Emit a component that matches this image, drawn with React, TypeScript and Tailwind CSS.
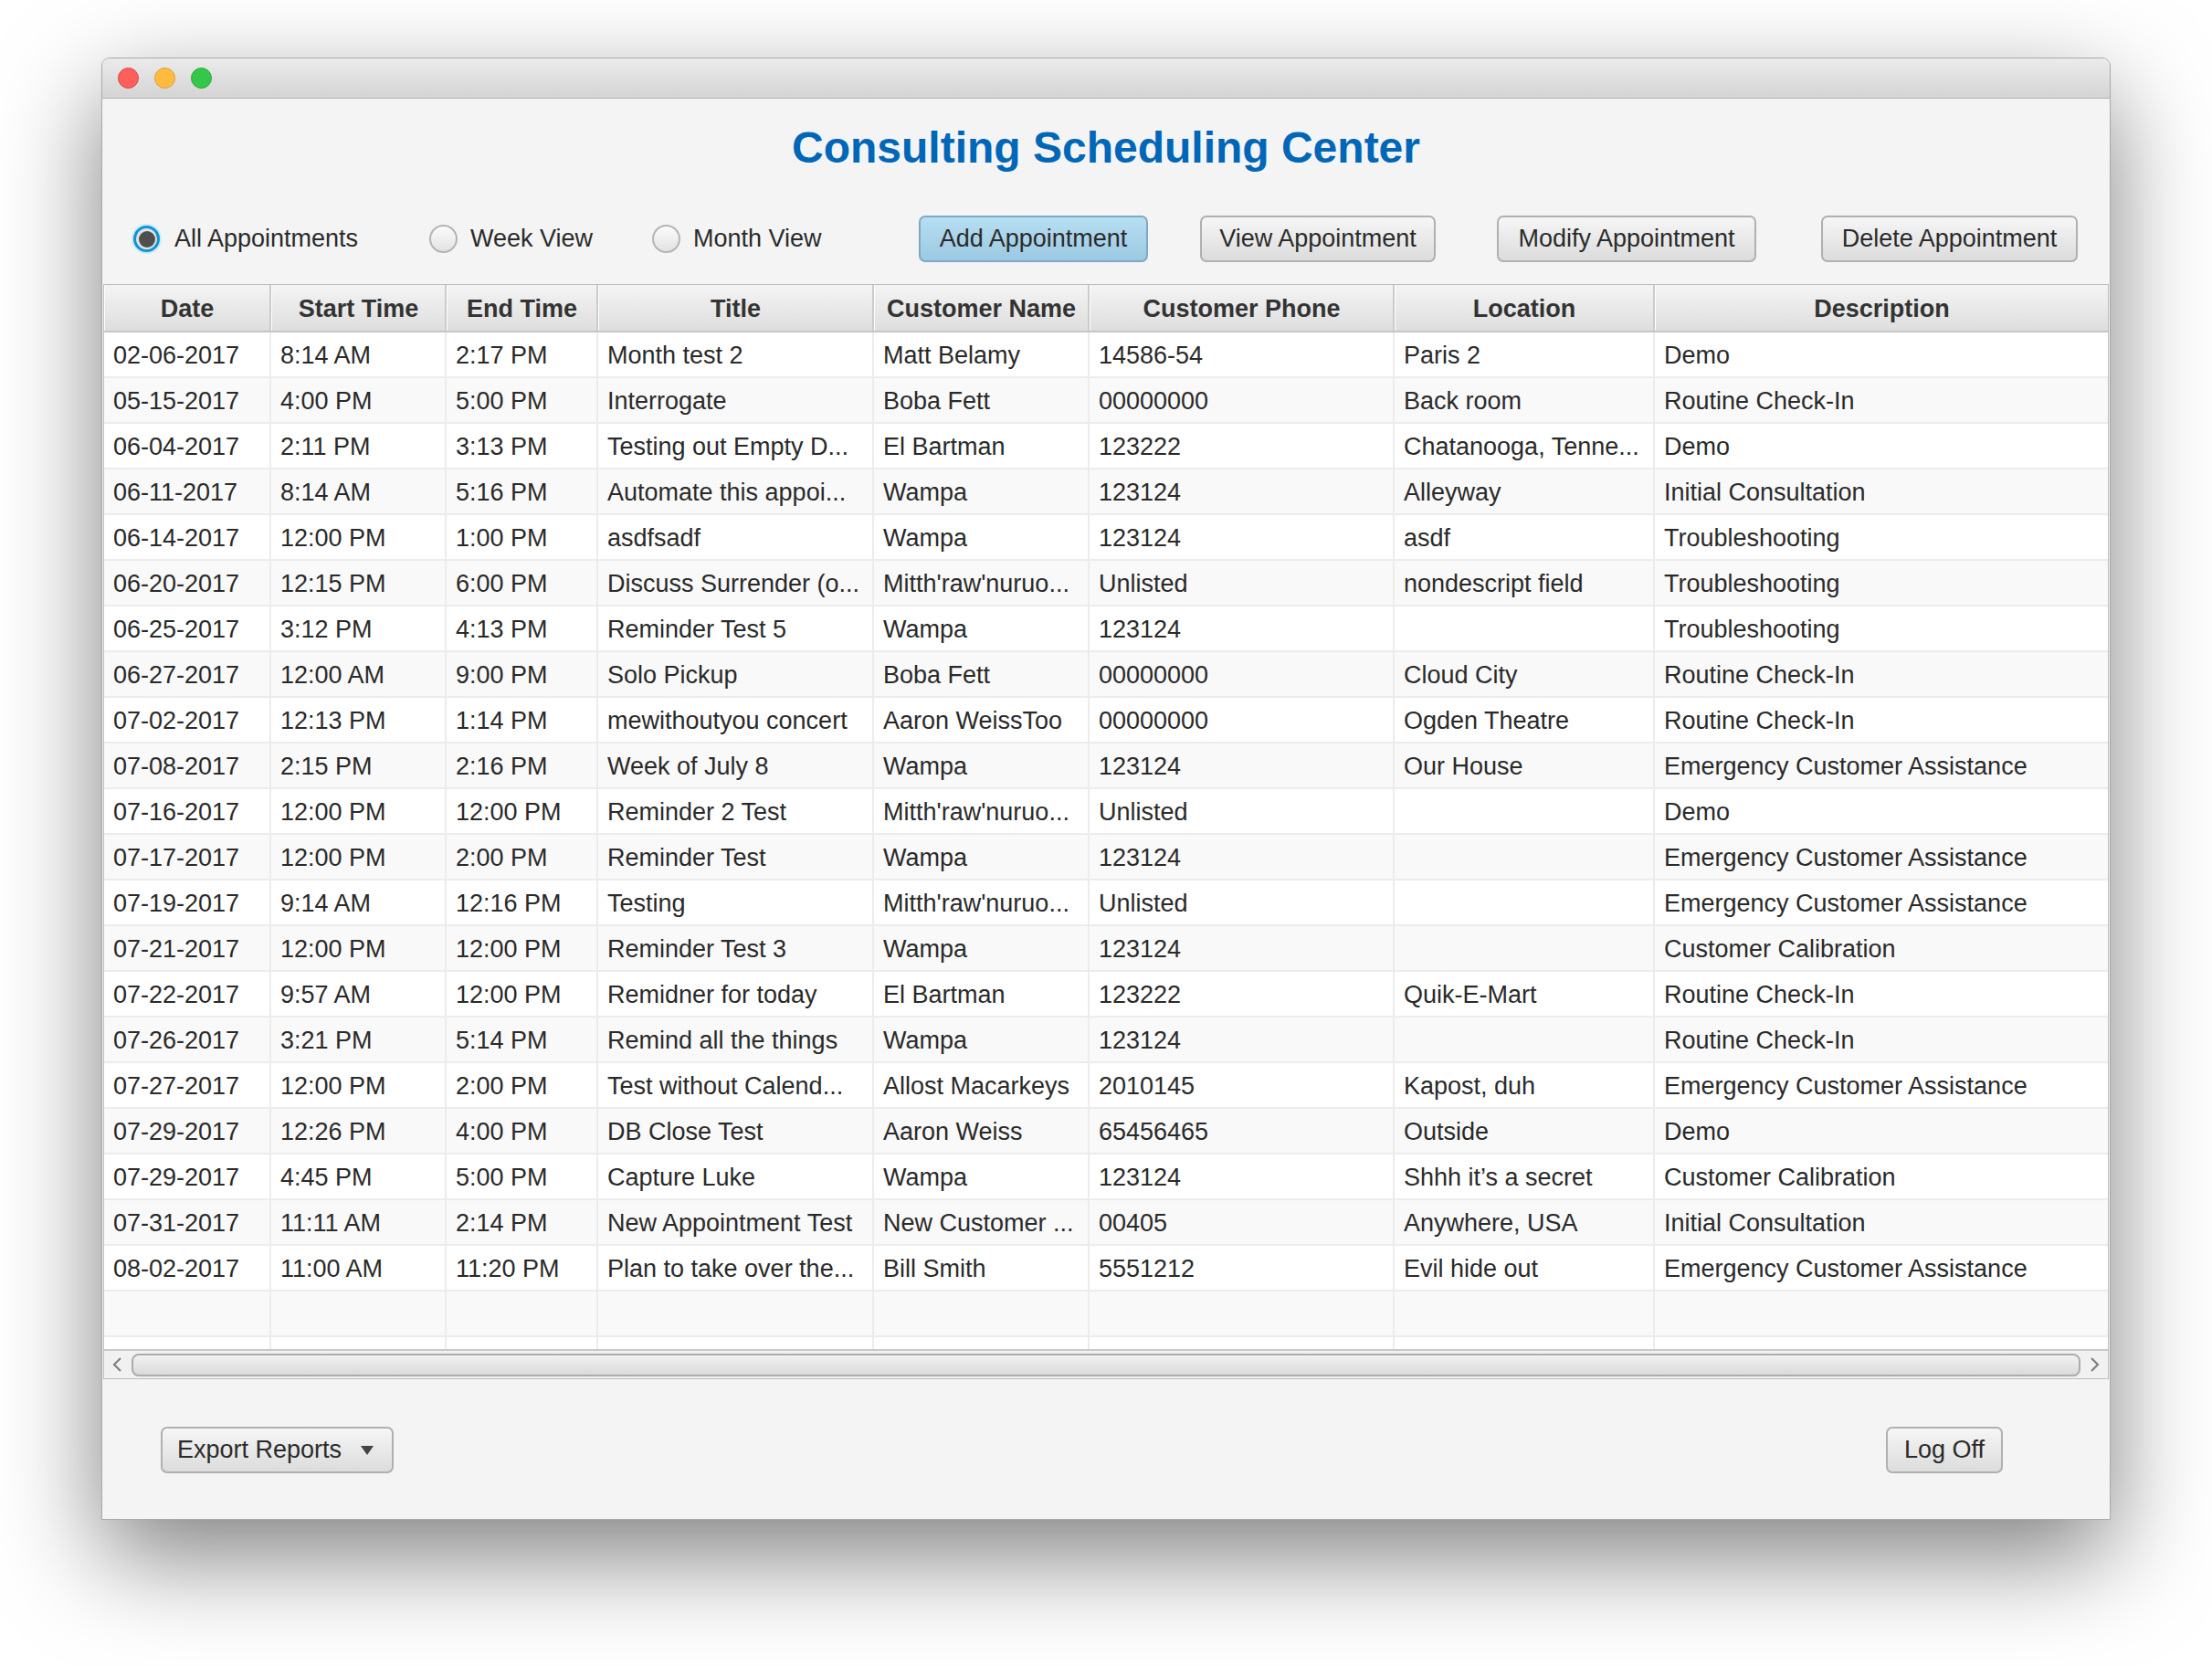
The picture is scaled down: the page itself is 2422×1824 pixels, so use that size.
import React from 'react';

const rows: string[][] = [
  ['02-06-2017', '8:14 AM', '2:17 PM', 'Month test 2', 'Matt Belamy', '14586-54', 'Paris 2', 'Demo'],
  ['05-15-2017', '4:00 PM', '5:00 PM', 'Interrogate', 'Boba Fett', '00000000', 'Back room', 'Routine Check-In'],
  ['06-04-2017', '2:11 PM', '3:13 PM', 'Testing out Empty D...', 'El Bartman', '123222', 'Chatanooga, Tenne...', 'Demo'],
  ['06-11-2017', '8:14 AM', '5:16 PM', 'Automate this appoi...', 'Wampa', '123124', 'Alleyway', 'Initial Consultation'],
  ['06-14-2017', '12:00 PM', '1:00 PM', 'asdfsadf', 'Wampa', '123124', 'asdf', 'Troubleshooting'],
  ['06-20-2017', '12:15 PM', '6:00 PM', 'Discuss Surrender (o...', "Mitth'raw'nuruo...", 'Unlisted', 'nondescript field', 'Troubleshooting'],
  ['06-25-2017', '3:12 PM', '4:13 PM', 'Reminder Test 5', 'Wampa', '123124', '', 'Troubleshooting'],
  ['06-27-2017', '12:00 AM', '9:00 PM', 'Solo Pickup', 'Boba Fett', '00000000', 'Cloud City', 'Routine Check-In'],
  ['07-02-2017', '12:13 PM', '1:14 PM', 'mewithoutyou concert', 'Aaron WeissToo', '00000000', 'Ogden Theatre', 'Routine Check-In'],
  ['07-08-2017', '2:15 PM', '2:16 PM', 'Week of July 8', 'Wampa', '123124', 'Our House', 'Emergency Customer Assistance'],
  ['07-16-2017', '12:00 PM', '12:00 PM', 'Reminder 2 Test', "Mitth'raw'nuruo...", 'Unlisted', '', 'Demo'],
  ['07-17-2017', '12:00 PM', '2:00 PM', 'Reminder Test', 'Wampa', '123124', '', 'Emergency Customer Assistance'],
  ['07-19-2017', '9:14 AM', '12:16 PM', 'Testing', "Mitth'raw'nuruo...", 'Unlisted', '', 'Emergency Customer Assistance'],
  ['07-21-2017', '12:00 PM', '12:00 PM', 'Reminder Test 3', 'Wampa', '123124', '', 'Customer Calibration'],
  ['07-22-2017', '9:57 AM', '12:00 PM', 'Remidner for today', 'El Bartman', '123222', 'Quik-E-Mart', 'Routine Check-In'],
  ['07-26-2017', '3:21 PM', '5:14 PM', 'Remind all the things', 'Wampa', '123124', '', 'Routine Check-In'],
  ['07-27-2017', '12:00 PM', '2:00 PM', 'Test without Calend...', 'Allost Macarkeys', '2010145', 'Kapost, duh', 'Emergency Customer Assistance'],
  ['07-29-2017', '12:26 PM', '4:00 PM', 'DB Close Test', 'Aaron Weiss', '65456465', 'Outside', 'Demo'],
  ['07-29-2017', '4:45 PM', '5:00 PM', 'Capture Luke', 'Wampa', '123124', 'Shhh it\u2019s a secret', 'Customer Calibration'],
  ['07-31-2017', '11:11 AM', '2:14 PM', 'New Appointment Test', 'New Customer ...', '00405', 'Anywhere, USA', 'Initial Consultation'],
  ['08-02-2017', '11:00 AM', '11:20 PM', 'Plan to take over the...', 'Bill Smith', '5551212', 'Evil hide out', 'Emergency Customer Assistance'],
  ['', '', '', '', '', '', '', ''],
  ['', '', '', '', '', '', '', ''],
];

const headers = ['Date', 'Start Time', 'End Time', 'Title', 'Customer Name', 'Customer Phone', 'Location', 'Description'];

const cols = 'grid grid-cols-[183px_192px_166px_302px_236px_334px_285px_1fr]';

const Radio = ({ label, checked, width }: { label: string; checked?: boolean; width: string }) => (
  <div className={`flex items-center gap-[14px] ${width}`}>
    {checked ? (
      <div className="w-[33px] h-[33px] rounded-full bg-[#cfe9f7] flex items-center justify-center">
        <div className="w-[29px] h-[29px] rounded-full border-[3px] border-[#0a96d8] bg-[#e2e2e2] flex items-center justify-center">
          <div className="w-[18px] h-[18px] rounded-full bg-[#4f4f4f]" />
        </div>
      </div>
    ) : (
      <div className="w-[31px] h-[31px] rounded-full border-2 border-[#b4b4b4] bg-gradient-to-b from-[#fbfbfb] to-[#e2e2e2]" />
    )}
    <span className="text-[27px] text-[#2b2b2b]">{label}</span>
  </div>
);

const Button = ({ label, width, primary }: { label: string; width: string; primary?: boolean }) => (
  <button
    className={`h-[51px] ${width} rounded-[7px] border-2 text-[27px] text-[#2b2b2b] flex items-center justify-center ${
      primary
        ? 'border-[#7fa9c2] bg-gradient-to-b from-[#b7def2] to-[#9bc9e2]'
        : 'border-[#b0b0b0] bg-gradient-to-b from-[#f6f6f6] to-[#dcdcdc]'
    }`}
  >
    {label}
  </button>
);

export default function App() {
  return (
    <div
      className="w-[2422px] h-[1824px] bg-white pt-[63px] pl-[111px] overflow-hidden"
      style={{ fontFamily: '"Liberation Sans", Arial, sans-serif' }}
    >
      <div className="w-[2200px] h-[1601px] flex flex-col rounded-t-[9px] bg-[#f4f4f4] border border-[#a9a9a9] shadow-[0_40px_110px_rgba(0,0,0,0.5)] overflow-hidden">
        {/* title bar */}
        <div className="h-[44px] shrink-0 flex items-center gap-[17px] pl-[17px] bg-gradient-to-b from-[#ebebeb] to-[#d4d4d4] border-b border-[#b3b3b3]">
          <div className="w-[23px] h-[23px] rounded-full bg-[#fc605c] border border-[#df4744]" />
          <div className="w-[23px] h-[23px] rounded-full bg-[#fdbc40] border border-[#de9e34]" />
          <div className="w-[23px] h-[23px] rounded-full bg-[#34c84a] border border-[#27aa35]" />
        </div>

        <div className="flex-1 flex flex-col">
          <h1 className="pt-[26px] h-[82px] leading-[56px] text-center text-[48px] font-bold text-[#0067b8]">
            Consulting Scheduling Center
          </h1>

          <div className="mt-[46px] h-[51px] flex items-center pl-[32px]">
            <Radio label="All Appointments" checked width="w-[326px]" />
            <Radio label="Week View" width="w-[244px]" />
            <Radio label="Month View" width="w-[292px]" />
            <Button label="Add Appointment" width="w-[251px]" primary />
            <div className="w-[57px]" />
            <Button label="View Appointment" width="w-[258px]" />
            <div className="w-[67px]" />
            <Button label="Modify Appointment" width="w-[284px]" />
            <div className="w-[71px]" />
            <Button label="Delete Appointment" width="w-[281px]" />
          </div>

          {/* table */}
          <div className="mt-[24px] mx-[1px] h-[1199px] flex flex-col border border-[#bdbdbd] bg-white">
            <div className={`${cols} h-[52px] shrink-0 bg-gradient-to-b from-[#f4f4f4] to-[#dedede] border-b-2 border-[#c6c6c6]`}>
              {headers.map((h, i) => (
                <div
                  key={h}
                  className={`flex items-center justify-center pt-[3px] text-[27px] font-bold text-[#333] border-l border-white ${
                    i < headers.length - 1 ? 'border-r-2 border-r-[#cbcbcb]' : ''
                  }`}
                >
                  {h}
                </div>
              ))}
            </div>
            <div className="h-[1115px] overflow-hidden">
              {rows.map((r, ri) => (
                <div
                  key={ri}
                  className={`${cols} h-[50px] border-b-2 border-[#ececec] ${ri % 2 === 0 ? 'bg-white' : 'bg-[#f9f9f9]'}`}
                >
                  {r.map((c, ci) => (
                    <div
                      key={ci}
                      className={`flex items-center pl-[10px] pt-[2px] text-[27px] text-[#2a2a2a] whitespace-nowrap overflow-hidden ${
                        ci < r.length - 1 ? 'border-r-2 border-[#ececec]' : ''
                      }`}
                    >
                      {c}
                    </div>
                  ))}
                </div>
              ))}
            </div>
            {/* horizontal scrollbar */}
            <div className="h-[32px] shrink-0 flex items-center bg-[#f1f1f1] border-t-2 border-[#c9c9c9]">
              <svg width="30" height="24" viewBox="0 0 30 24" className="shrink-0">
                <path d="M18 5 L11 12 L18 19" fill="none" stroke="#808080" strokeWidth="2.2" />
              </svg>
              <div className="flex-1 h-[25px] rounded-[8px] border-2 border-[#acacac] bg-gradient-to-b from-[#f2f2f2] to-[#dadada]" />
              <svg width="30" height="24" viewBox="0 0 30 24" className="shrink-0">
                <path d="M12 5 L19 12 L12 19" fill="none" stroke="#808080" strokeWidth="2.2" />
              </svg>
            </div>
          </div>

          {/* footer */}
          <div className="flex-1 flex items-start justify-between pt-[52px] pl-[64px] pr-[117px]">
            <button className="h-[51px] w-[255px] rounded-[7px] border-2 border-[#b0b0b0] bg-gradient-to-b from-[#f6f6f6] to-[#dcdcdc] flex items-center pl-[16px] gap-[20px] text-[27px] text-[#2b2b2b]">
              Export Reports
              <svg width="16" height="12" viewBox="0 0 16 12">
                <path d="M1 1 L15 1 L8 11 Z" fill="#444" />
              </svg>
            </button>
            <Button label="Log Off" width="w-[128px]" />
          </div>
        </div>
      </div>
    </div>
  );
}
